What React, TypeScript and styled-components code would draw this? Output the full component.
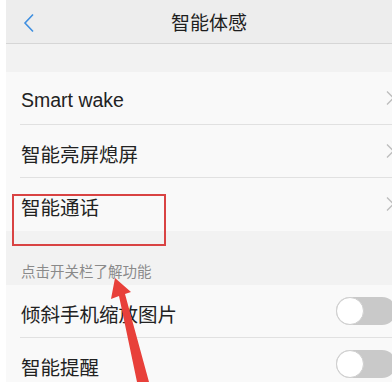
import React from 'react';
import styled, { createGlobalStyle } from 'styled-components';

const GlobalStyle = createGlobalStyle`
  html, body {
    margin: 0;
    padding: 0;
    background: #ffffff;
  }
  body {
    font-family: "Liberation Sans", "Noto Sans CJK SC", sans-serif;
    color: #222222;
  }
`;

const Page = styled.div`
  position: relative;
  width: 392px;
  height: 382px;
  overflow: hidden;
  padding-left: 6px;
  box-sizing: border-box;
  background: #ffffff;
`;

const Screen = styled.div`
  width: 396px;
  height: 100%;
  background: #f2f2f2;
  display: flex;
  flex-direction: column;
`;

const Header = styled.div`
  position: relative;
  height: 43px;
  flex-shrink: 0;
  display: flex;
  align-items: center;
  justify-content: center;
  background: #ededed;
  border-bottom: 1px solid #d6d6d6;
`;

const BackButton = styled.div`
  position: absolute;
  left: 16px;
  top: 13px;
  width: 14px;
  height: 20px;
  display: flex;
`;

const Title = styled.div`
  font-size: 19px;
  color: #1e1e1e;
  padding-left: 10px;
`;

const Spacer = styled.div<{ h: number }>`
  height: ${(p) => p.h}px;
  flex-shrink: 0;
`;

const Group = styled.div`
  background: #f9f9f9;
  flex-shrink: 0;
`;

const Row = styled.div`
  height: 53px;
  padding-left: 14px;
  display: flex;
`;

const RowBody = styled.div<{ divider?: boolean }>`
  flex: 1;
  display: flex;
  align-items: center;
  justify-content: space-between;
  border-bottom: ${(p) => (p.divider ? '1px solid #e1e1e1' : '1px solid transparent')};
`;

const Label = styled.div`
  font-size: 19.5px;
  color: #222222;
  padding-left: 1px;
  padding-top: 4px;
`;

const Chevron = styled.div`
  width: 14px;
  height: 14px;
  margin-right: 2px;
  display: flex;
`;

const SectionLabel = styled.div`
  height: 54px;
  flex-shrink: 0;
  box-sizing: border-box;
  display: flex;
  align-items: flex-end;
  padding: 0 0 4px 15px;
  font-size: 14.5px;
  color: #8a8a8a;
`;

const Toggle = styled.div`
  position: relative;
  width: 60px;
  height: 28px;
  border-radius: 14px;
  background: #c9c9c9;
  margin-right: 6px;
  flex-shrink: 0;
`;

const Knob = styled.div`
  position: absolute;
  left: 0;
  top: 0;
  width: 28px;
  height: 28px;
  box-sizing: border-box;
  border-radius: 50%;
  background: #ffffff;
  border: 1.5px solid #cfcfcf;
`;

const Highlight = styled.div`
  position: absolute;
  left: 12px;
  top: 194px;
  width: 154px;
  height: 52px;
  box-sizing: border-box;
  border: 2px solid #d94343;
  pointer-events: none;
`;

const ArrowLayer = styled.svg`
  position: absolute;
  left: 0;
  top: 0;
  pointer-events: none;
`;

const navItems = ['Smart wake', '智能亮屏熄屏', '智能通话'];
const toggleItems = ['倾斜手机缩放图片', '智能提醒'];

const App: React.FC = () => {
  return (
    <>
      <GlobalStyle />
      <Page>
        <Screen>
          <Header>
            <BackButton>
              <svg width="14" height="20" viewBox="0 0 14 20">
                <path d="M11 1.5 L3 10 L11 18.5" fill="none" stroke="#3f8fe0" strokeWidth="1.6" />
              </svg>
            </BackButton>
            <Title>智能体感</Title>
          </Header>
          <Spacer h={28} />
          <Group>
            {navItems.map((item, i) => (
              <Row key={item}>
                <RowBody divider={i < navItems.length - 1}>
                  <Label>{item}</Label>
                  <Chevron>
                    <svg width="14" height="14" viewBox="0 0 14 14">
                      <path d="M1 0.5 L7.5 7 L1 13.5" fill="none" stroke="#bdbdbd" strokeWidth="1.3" />
                    </svg>
                  </Chevron>
                </RowBody>
              </Row>
            ))}
          </Group>
          <SectionLabel>点击开关栏了解功能</SectionLabel>
          <Group>
            {toggleItems.map((item, i) => (
              <Row key={item}>
                <RowBody divider={i < toggleItems.length - 1}>
                  <Label>{item}</Label>
                  <Toggle>
                    <Knob />
                  </Toggle>
                </RowBody>
              </Row>
            ))}
          </Group>
        </Screen>
        <Highlight />
        <ArrowLayer width="392" height="382" viewBox="0 0 392 382">
          <polygon points="115,278 131,292 125,294 149,382 137,382 119,296 111,299" fill="#e8403a" />
        </ArrowLayer>
      </Page>
    </>
  );
};

export default App;
